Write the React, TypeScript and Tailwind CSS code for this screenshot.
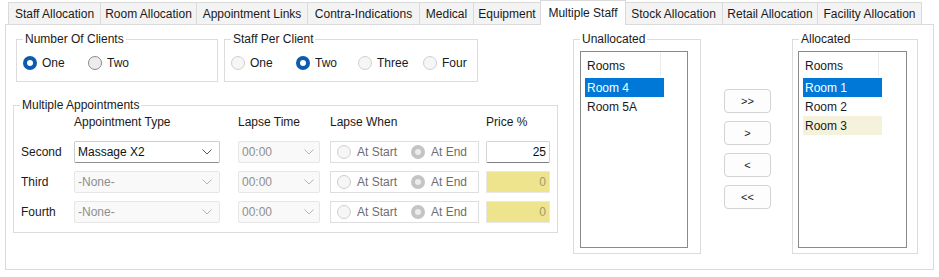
import React from 'react';

const TABS = [
  { label: 'Staff Allocation', w: 93 },
  { label: 'Room Allocation', w: 96 },
  { label: 'Appointment Links', w: 111 },
  { label: 'Contra-Indications', w: 112 },
  { label: 'Medical', w: 54 },
  { label: 'Equipment', w: 67 },
  { label: 'Multiple Staff', w: 84, active: true },
  { label: 'Stock Allocation', w: 98 },
  { label: 'Retail Allocation', w: 95 },
  { label: 'Facility Allocation', w: 104 },
];

type RadioKind = 'on' | 'off' | 'offDisabled' | 'onDisabled';

function Radio({ kind }: { kind: RadioKind }) {
  if (kind === 'on') {
    return (
      <span className="w-[14px] h-[14px] rounded-full bg-[#0b5cad] flex items-center justify-center shrink-0">
        <span className="w-[6px] h-[6px] rounded-full bg-white" />
      </span>
    );
  }
  if (kind === 'onDisabled') {
    return (
      <span className="w-[14px] h-[14px] rounded-full bg-[#c4c4c4] flex items-center justify-center shrink-0">
        <span className="w-[6px] h-[6px] rounded-full bg-[#ececec]" />
      </span>
    );
  }
  if (kind === 'off') {
    return <span className="w-[14px] h-[14px] rounded-full border border-[#8c8c8c] bg-[#ececec] shrink-0" />;
  }
  return <span className="w-[14px] h-[14px] rounded-full border border-[#cfcfcf] bg-[#f6f6f6] shrink-0" />;
}

function Chevron({ color }: { color: string }) {
  return (
    <svg width="10" height="6" viewBox="0 0 10 6" fill="none" className="shrink-0">
      <polyline points="0.5,0.5 5,5 9.5,0.5" stroke={color} strokeWidth="1" />
    </svg>
  );
}

function Combo({ value, w, enabled, chevronPr }: { value: string; w: string; enabled?: boolean; chevronPr: string }) {
  return (
    <div
      className={
        enabled
          ? `${w} h-[22px] flex items-center justify-between pl-[3px] ${chevronPr} bg-white border border-[#cdcdcd] border-b-[#8e8e8e] rounded-[2px] text-[#111]`
          : `${w} h-[22px] flex items-center justify-between pl-[3px] ${chevronPr} bg-[#f9f9f9] border border-[#e6e6e6] rounded-[2px] text-[#8f8f8f]`
      }
    >
      <span>{value}</span>
      <Chevron color={enabled ? '#555' : '#b5b5b5'} />
    </div>
  );
}

function LapseWhen() {
  return (
    <div className="w-[149px] h-[22px] ml-[10px] flex items-center pl-[6px] border border-[#dedede] bg-white text-[#6e6e6e]">
      <div className="w-[74px] flex items-center gap-[6px]">
        <Radio kind="offDisabled" />
        <span>At Start</span>
      </div>
      <div className="flex items-center gap-[6px]">
        <Radio kind="onDisabled" />
        <span>At End</span>
      </div>
    </div>
  );
}

function ApptRow({ label, type, enabled, price }: { label: string; type: string; enabled?: boolean; price: string }) {
  return (
    <div className="flex items-center h-[22px] mb-[8px]">
      <span className="w-[53px]">{label}</span>
      <Combo value={type} w="w-[146px]" enabled={enabled} chevronPr="pr-[7px]" />
      <div className="ml-[18px]">
        <Combo value="00:00" w="w-[82px]" chevronPr="pr-[5px]" />
      </div>
      <LapseWhen />
      {enabled ? (
        <div className="ml-[7px] w-[64px] h-[22px] flex items-center justify-end pr-[3px] bg-white border border-[#d4d4d4] border-b-[#7f7f7f] rounded-[2px] text-[#111]">
          {price}
        </div>
      ) : (
        <div className="ml-[7px] w-[64px] h-[22px] flex items-center justify-end pr-[3px] bg-[#eee48e] border border-[#e8e8e8] text-[#a09a70]">
          {price}
        </div>
      )}
    </div>
  );
}

function ListBox({ rows, w, headerW }: { rows: { label: string; sel?: boolean; tint?: boolean }[]; w: string; headerW: string }) {
  return (
    <div className={`${w} h-[197px] border border-[#8a8a8a] bg-white`}>
      <div className={`${headerW} h-[24px] ml-[1px] flex items-end pb-[3px] pl-[5px] border-r border-[#ececec]`}>
        Rooms
      </div>
      <div className="pt-[2px] pl-[4px]">
        {rows.map((r) => (
          <div
            key={r.label}
            className={
              r.sel
                ? `${headerW} h-[19px] flex items-center pl-[2px] bg-[#0078d7] text-white`
                : r.tint
                ? `${headerW} h-[19px] flex items-center pl-[2px] bg-[#f5f2dc]`
                : `${headerW} h-[19px] flex items-center pl-[2px]`
            }
          >
            {r.label}
          </div>
        ))}
      </div>
    </div>
  );
}

export default function App() {
  return (
    <div className="w-[939px] h-[277px] bg-white text-[12px] leading-[14px] text-[#1a1a1a] font-['Liberation_Sans',Arial,sans-serif] overflow-hidden">
      {/* tab strip */}
      <div className="flex items-end h-[24px] pl-[8px]">
        {TABS.map((t) =>
          t.active ? (
            <div
              key={t.label}
              className="relative z-10 h-[25px] -mb-px -mx-[1px] flex items-start pt-[5px] justify-center bg-white border border-b-0 border-[#d9d9d9]"
              style={{ width: t.w + 2 }}
            >
              {t.label}
            </div>
          ) : (
            <div
              key={t.label}
              className="h-[22px] flex items-center justify-center bg-[#f3f3f3] border border-b-0 border-l-0 first:border-l border-[#dadada]"
              style={{ width: t.w }}
            >
              {t.label}
            </div>
          )
        )}
      </div>

      {/* tab page */}
      <div className="ml-[5px] w-[929px] h-[246px] border border-[#dadada] flex">
        {/* left column */}
        <div className="ml-[7px] w-[545px]">
          <div className="flex mt-[7px] ml-[3px]">
            <fieldset className="w-[202px] h-[50px] border border-[#dcdcdc]">
              <legend className="ml-[6px] px-[2px]">Number Of Clients</legend>
              <div className="flex items-center mt-[10px] ml-[6px]">
                <div className="w-[65px] flex items-center gap-[5px]">
                  <Radio kind="on" />
                  <span>One</span>
                </div>
                <div className="flex items-center gap-[5px]">
                  <Radio kind="off" />
                  <span>Two</span>
                </div>
              </div>
            </fieldset>
            <fieldset className="ml-[6px] w-[254px] h-[50px] border border-[#dcdcdc]">
              <legend className="ml-[6px] px-[2px]">Staff Per Client</legend>
              <div className="flex items-center mt-[10px] ml-[6px]">
                <div className="w-[65px] flex items-center gap-[5px]">
                  <Radio kind="offDisabled" />
                  <span>One</span>
                </div>
                <div className="w-[62px] flex items-center gap-[5px]">
                  <Radio kind="on" />
                  <span>Two</span>
                </div>
                <div className="w-[65px] flex items-center gap-[5px]">
                  <Radio kind="offDisabled" />
                  <span>Three</span>
                </div>
                <div className="flex items-center gap-[5px]">
                  <Radio kind="offDisabled" />
                  <span>Four</span>
                </div>
              </div>
            </fieldset>
          </div>

          <fieldset className="mt-[16px] w-[545px] h-[135px] border border-[#dcdcdc] pl-[7px]">
            <legend className="ml-[-1px] px-[2px]">Multiple Appointments</legend>
            <div className="flex mt-[3px] mb-[12px]">
              <span className="w-[53px]" />
              <span className="w-[164px]">Appointment Type</span>
              <span className="w-[92px]">Lapse Time</span>
              <span className="w-[156px]">Lapse When</span>
              <span>Price %</span>
            </div>
            <ApptRow label="Second" type="Massage X2" enabled price="25" />
            <ApptRow label="Third" type="-None-" price="0" />
            <ApptRow label="Fourth" type="-None-" price="0" />
          </fieldset>
        </div>

        {/* unallocated */}
        <fieldset className="ml-[15px] mt-[7px] w-[128px] h-[222px] border border-[#dcdcdc] pl-[6px]">
          <legend className="ml-[0px] px-[2px]">Unallocated</legend>
          <div className="mt-[5px]">
            <ListBox w="w-[108px]" headerW="w-[79px]" rows={[{ label: 'Room 4', sel: true }, { label: 'Room 5A' }]} />
          </div>
        </fieldset>

        {/* move buttons */}
        <div className="ml-[23px] mt-[64px] flex flex-col gap-[8px]">
          {['>>', '>', '<', '<<'].map((b) => (
            <div
              key={b}
              className="w-[47px] h-[24px] flex items-center justify-center bg-[#fdfdfd] border border-[#d3d3d3] rounded-[4px] text-[11px]"
            >
              {b}
            </div>
          ))}
        </div>

        {/* allocated */}
        <fieldset className="ml-[21px] mt-[7px] w-[126px] h-[222px] border border-[#dcdcdc] pl-[5px]">
          <legend className="ml-[1px] px-[2px]">Allocated</legend>
          <div className="mt-[5px]">
            <ListBox
              w="w-[109px]"
              headerW="w-[79px]"
              rows={[{ label: 'Room 1', sel: true }, { label: 'Room 2' }, { label: 'Room 3', tint: true }]}
            />
          </div>
        </fieldset>
      </div>
    </div>
  );
}
